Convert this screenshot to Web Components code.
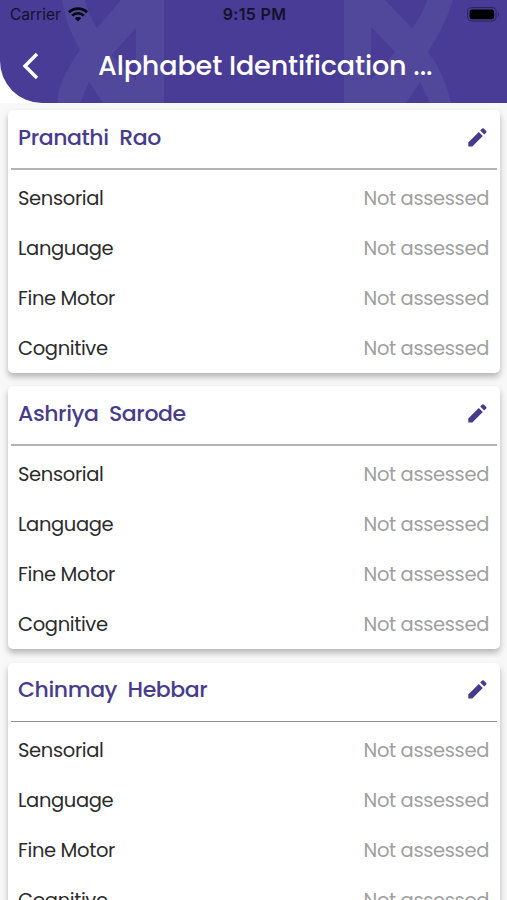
<!DOCTYPE html>
<html lang="en">
<head>
<meta charset="utf-8">
<title>Assessment</title>
<style>
    body{
        margin: 0;
        font-family: Poppins, Inter, sans-serif;
        background-color: #f8f8f8;
    }
</style>
</head>
<body>
<assess-screen></assess-screen>
<script>
    const areas = ["Sensorial", "Language", "Fine Motor", "Cognitive"];
    const students = ["Pranathi  Rao", "Ashriya  Sarode", "Chinmay  Hebbar"];

    class StatusBar extends HTMLElement {
        constructor() {
            super();
            this.attachShadow({ mode: 'open' });
        }

        connectedCallback() {
            this.shadowRoot.innerHTML = `
            <style>
                :host{
                    display: grid;
                    grid-template-columns: 1fr auto 1fr;
                    align-items: center;
                    height: 29px;
                    padding: 0 8px 0 10px;
                    font: 400 15.5px/29px Inter, sans-serif;
                    color: #15112b;
                }
                .left{ display: flex; align-items: center; gap: 7px; }
                .time{ font-size: 16px; font-weight: 600; letter-spacing: .35px; }
                .battery{ justify-self: end; margin-right: -1px; }
                svg{ display: block; }
            </style>
            <div class="left"><span>Carrier</span>
                <svg width="20" height="15" viewBox="0 0 20 15" fill="none" stroke="#08060f" stroke-width="2.7">
                    <path d="M1 5.2a13 13 0 0 1 18 0M4.2 8.6a8.3 8.3 0 0 1 11.6 0"/>
                    <path d="M10 14.5L6.8 11.3a4.6 4.6 0 0 1 6.4 0z" fill="#08060f" stroke="none"/>
                </svg>
            </div>
            <span class="time">9:15 PM</span>
            <svg class="battery" width="33" height="15" viewBox="0 0 33 15">
                <rect x=".6" y=".6" width="28.5" height="13.5" rx="4" fill="none" stroke="#2b2459"/>
                <rect x="2.6" y="2.6" width="24.5" height="9.6" rx="2.2" fill="#000"/>
                <path d="M31 5v5q2-2.5 0-5z" fill="#2b2459"/>
            </svg>`;
        }
    }

    class AppHeader extends HTMLElement {
        constructor() {
            super();
            this.attachShadow({ mode: 'open' });
        }

        connectedCallback() {
            this.shadowRoot.innerHTML = `
            <style>
                :host{
                    display: block;
                    height: 103px;
                    background-color: #fff;
                }
                .bar{
                    position: relative;
                    height: 103px;
                    background-color: #483c96;
                    border-bottom-left-radius: 42px;
                    overflow: hidden;
                }
                .pattern{ position: absolute; top: 0; left: 0; }
                status-bar, .row{ position: relative; }
                .row{
                    display: flex;
                    align-items: center;
                    height: 74px;
                    padding-left: 22px;
                }
                .back{ width: 17px; height: 28px; margin-right: 59px; }
                .title{
                    font-size: 27px;
                    font-weight: 500;
                    line-height: 74px;
                    letter-spacing: -.13px;
                    color: #fff;
                    white-space: pre;
                }
            </style>
            <div class="bar">
                <svg class="pattern" width="507" height="103" fill="#51479b" fill-rule="evenodd">
                    <path d="M62 0Q66 26 80 50Q64 72 58 93V103H80L89 82L103 103H164V0H121L97 28Q88 14 85 0ZM136 28V80L112 55Z"/>
                    <path d="M453 0Q445 26 428 52Q444 72 451 103H430L420 82L406 103H344V0H385L412 28Q423 14 427 0ZM371 27V80L395 52Z"/>
                </svg>
                <status-bar></status-bar>
                <div class="row">
                    <svg class="back" viewBox="0 0 17 28" fill="none" stroke="#fff" stroke-width="3.4"><path d="M15 2L3 14L15 26"/></svg>
                    <div class="title"><slot></slot></div>
                </div>
            </div>`;
        }
    }

    class AreaRow extends HTMLElement {
        constructor() {
            super();
            this.attachShadow({ mode: 'open' });
        }

        connectedCallback() {
            this.shadowRoot.innerHTML = `
            <style>
                :host{
                    display: flex;
                    justify-content: space-between;
                    height: 50px;
                    padding: 0 11px 0 10px;
                    font-size: 19.5px;
                    line-height: 51px;
                    letter-spacing: -.36px;
                    color: #2c2c2c;
                }
                .status{ color: #a0a0a0; }
            </style>
            <span><slot></slot></span><span class="status">${this.getAttribute("status")}</span>`;
        }
    }

    class StudentCard extends HTMLElement {
        constructor() {
            super();
            this.attachShadow({ mode: 'open' });
        }

        connectedCallback() {
            this.shadowRoot.innerHTML = `
            <style>
                :host{
                    display: block;
                    height: 263px;
                    background-color: #fff;
                    border-radius: 5px;
                    box-shadow: 0 4px 6px rgba(0, 0, 0, .27);
                }
                .head{
                    display: flex;
                    justify-content: space-between;
                    align-items: center;
                    box-sizing: border-box;
                    height: 60px;
                    margin: 0 3px;
                    padding: 0 10px 3px 7px;
                    border-bottom: 2px solid #b4b4b4;
                    font-size: 22px;
                    font-weight: 500;
                    letter-spacing: -.42px;
                    color: #483c8c;
                    white-space: pre;
                }
                .areas{ padding-top: 3px; }
                :host(:last-child) .head{ height: 59px; padding-bottom: 4px; border-bottom: 1px solid #8e8e8e; }
                :host(:last-child) .areas{ padding-top: 3.5px; }
            </style>
            <div class="head"><span>${this.getAttribute("name")}</span><svg width="19" height="19" fill="#463a8c"><path d="M.3 14.4L10.8 3.9L14.8 7.9L4.3 18.4H.3ZM12.2 2.5L14.2.6Q15 0 15.8.6L18.2 3Q18.8 3.8 18.2 4.5L16.2 6.5Z"/></svg></div>
            <div class="areas"><slot></slot></div>`;
        }
    }

    class AssessScreen extends HTMLElement {
        constructor() {
            super();
            this.attachShadow({ mode: 'open' });
        }

        connectedCallback() {
            this.shadowRoot.innerHTML = `
            <style>
                :host{ display: block; height: 900px; overflow: hidden; }
                .list{ display: flex; flex-direction: column; gap: 13.4px; padding: 7px 7px 0 8px; }
            </style>
            <app-header>Alphabet Identification ...</app-header>
            <div class="list">
                ${students.map(name => `<student-card name="${name}">
                    ${areas.map(area => `<area-row status="Not assessed">${area}</area-row>`).join("")}
                </student-card>`).join("")}
            </div>`;
        }
    }

    customElements.define('status-bar', StatusBar);
    customElements.define('app-header', AppHeader);
    customElements.define('area-row', AreaRow);
    customElements.define('student-card', StudentCard);
    customElements.define('assess-screen', AssessScreen);
</script>
</body>
</html>
